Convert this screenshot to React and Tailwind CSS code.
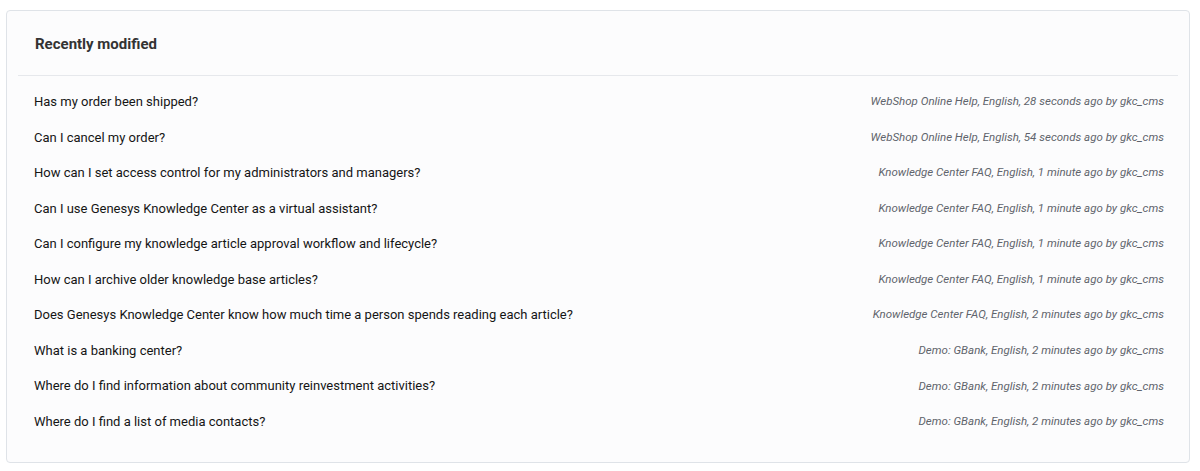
const rows = [
  ["Has my order been shipped?", "WebShop Online Help, English, 28 seconds ago by gkc_cms"],
  ["Can I cancel my order?", "WebShop Online Help, English, 54 seconds ago by gkc_cms"],
  ["How can I set access control for my administrators and managers?", "Knowledge Center FAQ, English, 1 minute ago by gkc_cms"],
  ["Can I use Genesys Knowledge Center as a virtual assistant?", "Knowledge Center FAQ, English, 1 minute ago by gkc_cms"],
  ["Can I configure my knowledge article approval workflow and lifecycle?", "Knowledge Center FAQ, English, 1 minute ago by gkc_cms"],
  ["How can I archive older knowledge base articles?", "Knowledge Center FAQ, English, 1 minute ago by gkc_cms"],
  ["Does Genesys Knowledge Center know how much time a person spends reading each article?", "Knowledge Center FAQ, English, 2 minutes ago by gkc_cms"],
  ["What is a banking center?", "Demo: GBank, English, 2 minutes ago by gkc_cms"],
  ["Where do I find information about community reinvestment activities?", "Demo: GBank, English, 2 minutes ago by gkc_cms"],
  ["Where do I find a list of media contacts?", "Demo: GBank, English, 2 minutes ago by gkc_cms"],
];

export default function App() {
  return (
    <div className="w-[1200px] h-[471px] bg-white pt-[10px] pl-[6px]" style={{ fontFamily: "Roboto, 'Liberation Sans', sans-serif" }}>
      <div className="w-[1184px] h-[453px] rounded-[4px] border border-[#dfe3e8] bg-[#fcfcfd] px-[11px]">
        <div className="h-[65px] flex items-center px-[17px] border-b border-[#e6e8ec]">
          <h2 className="text-[15px] font-bold text-[#333333] pt-[2px]">Recently modified</h2>
        </div>
        <div className="pt-[8px]">
          {rows.map(([q, m], i) => (
            <div key={i} className="h-[35.56px] flex items-center justify-between pl-[16px] pr-[14px]">
              <span className="text-[13px] text-[#151515]">{q}</span>
              <span className="text-[11.5px] italic text-[#5f646c]">{m}</span>
            </div>
          ))}
        </div>
      </div>
    </div>
  );
}
